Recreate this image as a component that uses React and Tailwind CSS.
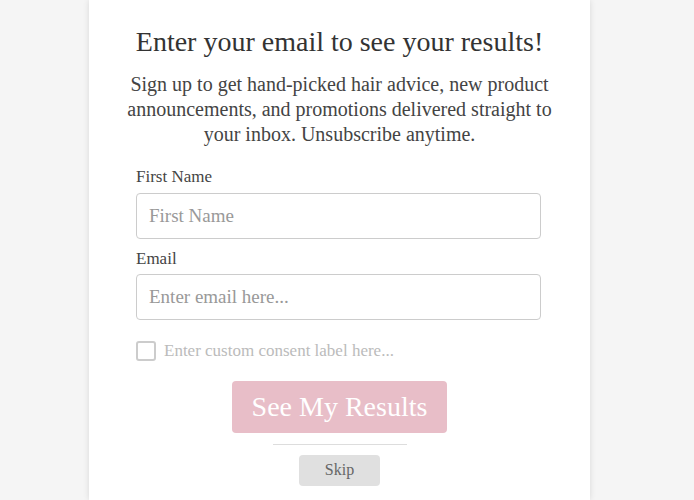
import React from 'react'

export default function App() {
  return (
    <div className="min-h-[500px] bg-[#f5f5f5] overflow-hidden" style={{ fontFamily: '"Liberation Serif", serif' }}>
      <div className="ml-[89px] w-[501px] h-[500px] bg-white shadow-[0_0_6px_rgba(0,0,0,0.12)] px-[47px] pt-[24px]">
        <h1 className="-mx-[20px] whitespace-nowrap text-center text-[28px] leading-[36px] text-[#333]">Enter your email to see your results!</h1>
        <p className="mt-[12px] text-center text-[20px] leading-[25px] text-[#444] -mx-[20px]">
          Sign up to get hand-picked hair advice, new product announcements, and promotions delivered straight to your inbox. Unsubscribe anytime.
        </p>
        <div className="mt-[20px]">
          <label className="block text-[17px] leading-[20px] text-[#444]">First Name</label>
          <input
            className="mt-[6px] w-[405px] h-[46px] rounded-[4px] border border-[#ccc] px-[12px] text-[19px] placeholder:text-[#999] outline-none"
            placeholder="First Name"
          />
          <label className="block mt-[10px] text-[17px] leading-[20px] text-[#444]">Email</label>
          <input
            className="mt-[5px] w-[405px] h-[46px] rounded-[4px] border border-[#ccc] px-[12px] text-[19px] placeholder:text-[#999] outline-none"
            placeholder="Enter email here..."
          />
          <div className="mt-[18px] flex items-center gap-[8px]">
            <span className="w-[20px] h-[20px] rounded-[3px] border-2 border-[#ccc]" />
            <span className="text-[17px] text-[#bbb]">Enter custom consent label here...</span>
          </div>
        </div>
        <div className="flex flex-col items-center">
          <button className="mt-[17px] w-[215px] h-[52px] rounded-[4px] bg-[#e8bec8] text-white text-[28px]">See My Results</button>
          <div className="mt-[11px] w-[134px] h-px bg-[#ddd]" />
          <button className="mt-[10px] w-[81px] h-[31px] rounded-[4px] bg-[#e0e0e0] text-[#666] text-[16px]">Skip</button>
        </div>
      </div>
    </div>
  )
}
